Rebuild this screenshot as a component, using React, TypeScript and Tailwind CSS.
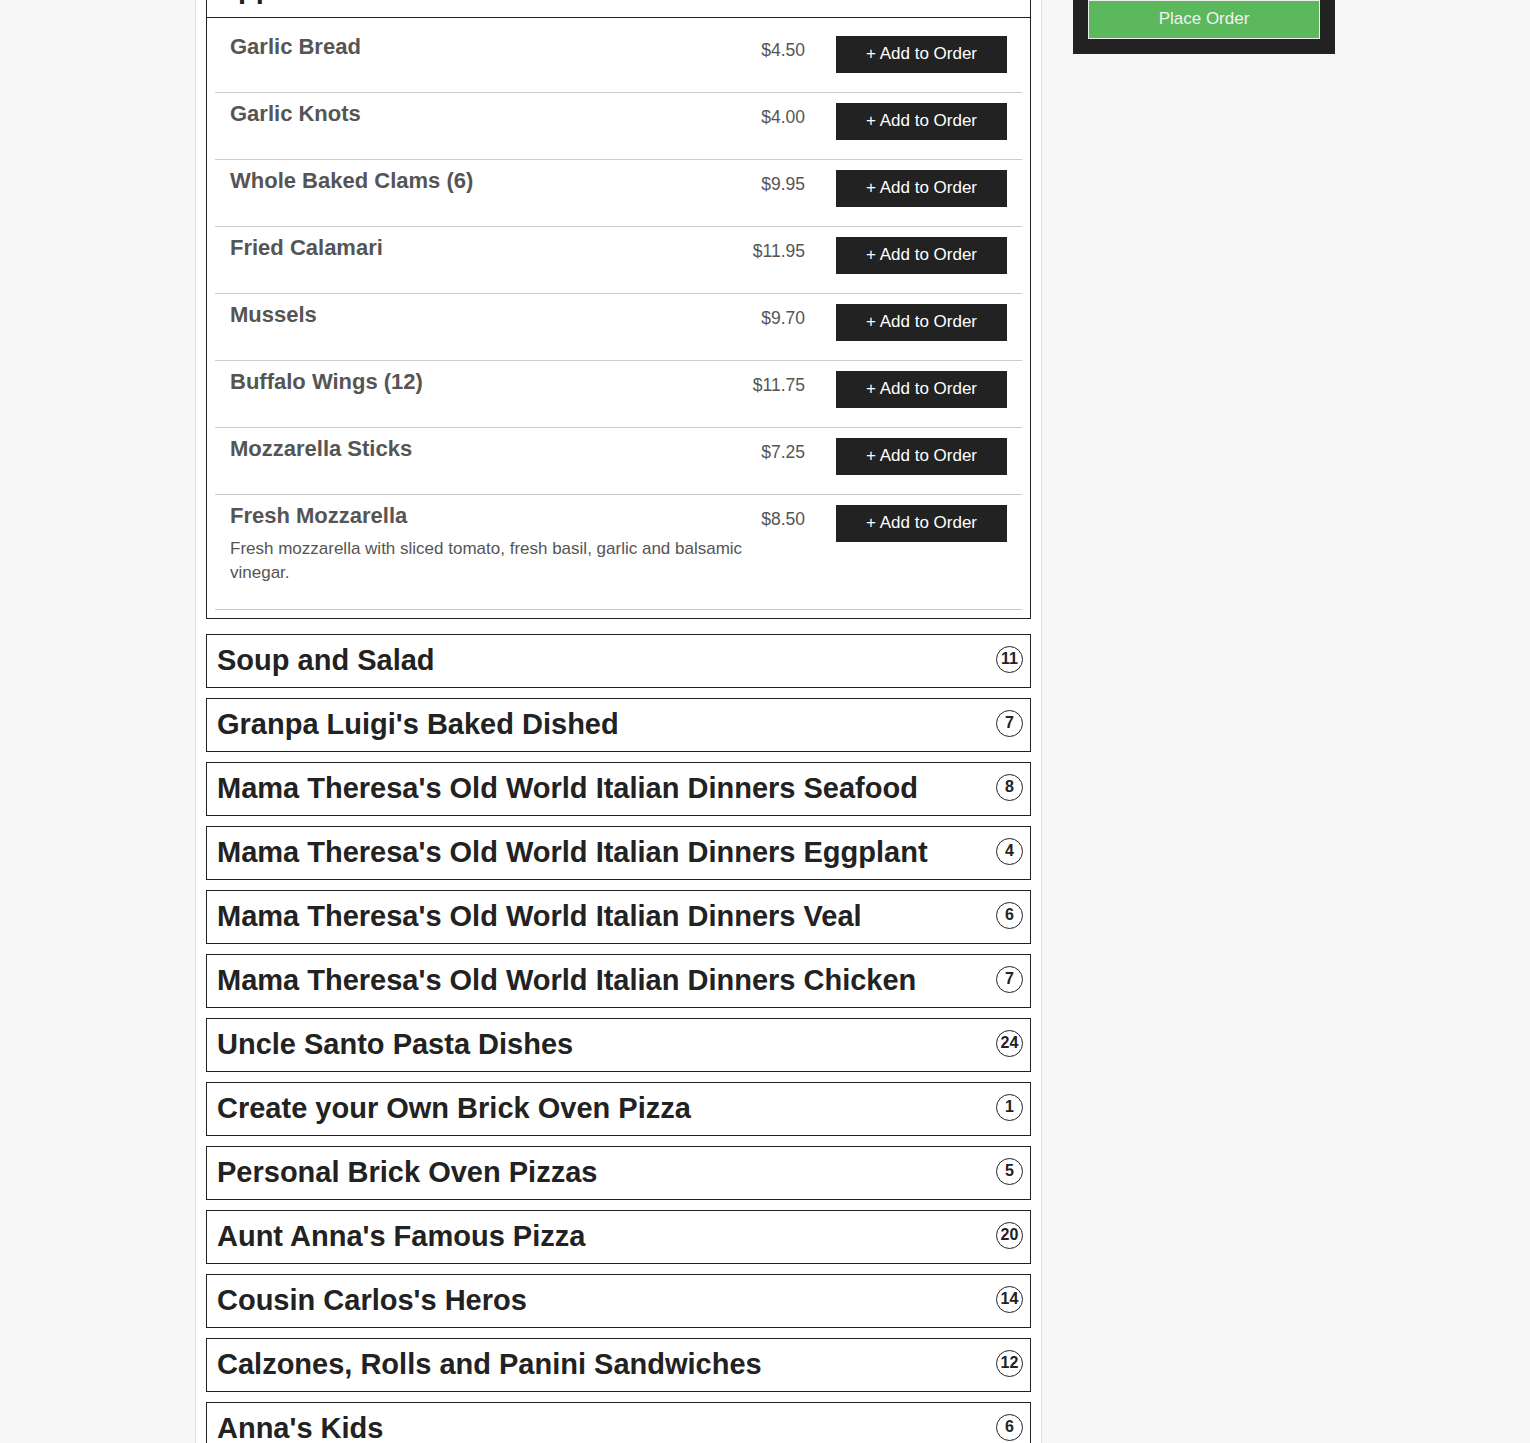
import React from "react";

const items = [
  { name: "Garlic Bread", price: "$4.50" },
  { name: "Garlic Knots", price: "$4.00" },
  { name: "Whole Baked Clams (6)", price: "$9.95" },
  { name: "Fried Calamari", price: "$11.95" },
  { name: "Mussels", price: "$9.70" },
  { name: "Buffalo Wings (12)", price: "$11.75" },
  { name: "Mozzarella Sticks", price: "$7.25" },
  {
    name: "Fresh Mozzarella",
    price: "$8.50",
    desc: "Fresh mozzarella with sliced tomato, fresh basil, garlic and balsamic vinegar.",
  },
];

const sections = [
  { title: "Soup and Salad", count: 11 },
  { title: "Granpa Luigi's Baked Dished", count: 7 },
  { title: "Mama Theresa's Old World Italian Dinners Seafood", count: 8 },
  { title: "Mama Theresa's Old World Italian Dinners Eggplant", count: 4 },
  { title: "Mama Theresa's Old World Italian Dinners Veal", count: 6 },
  { title: "Mama Theresa's Old World Italian Dinners Chicken", count: 7 },
  { title: "Uncle Santo Pasta Dishes", count: 24 },
  { title: "Create your Own Brick Oven Pizza", count: 1 },
  { title: "Personal Brick Oven Pizzas", count: 5 },
  { title: "Aunt Anna's Famous Pizza", count: 20 },
  { title: "Cousin Carlos's Heros", count: 14 },
  { title: "Calzones, Rolls and Panini Sandwiches", count: 12 },
  { title: "Anna's Kids", count: 6 },
];

function Badge({ n }: { n: number }) {
  return (
    <span className="mt-[-4px] flex h-[27px] w-[27px] items-center justify-center rounded-full border border-[#222] text-[16px] font-bold leading-none text-[#222]">
      {n}
    </span>
  );
}

function SectionHeader({ title, count, open }: { title: string; count: number; open?: boolean }) {
  return (
    <div
      className={`flex h-[52px] items-center justify-between pl-[10px] pr-[7px] ${
        open ? "border-b border-[#222] pb-[6px]" : ""
      }`}
    >
      <h2 className="mt-[-1px] text-[29px] font-bold leading-none text-[#222]">{title}</h2>
      <Badge n={count} />
    </div>
  );
}

export default function App() {
  return (
    <div
      className="min-h-screen overflow-hidden bg-[#f7f7f7]"
      style={{ fontFamily: '"Liberation Sans", Arial, sans-serif' }}
    >
      <div className="mx-auto flex w-[1140px] items-start gap-[31px]">
        {/* Menu column */}
        <div className="min-h-screen w-[847px] border-x border-[#ddd] bg-white px-[10px] pb-10">
          {/* Open section */}
          <div className="-mt-[35px] border border-[#222]">
            <SectionHeader title="Appetizers" count={8} open />
            <div className="px-[8px] pt-[8px] pb-[8px]">
              {items.map((it) => (
                <div key={it.name} className="flex border-b border-[#ccc] pl-[15px] pr-[15px] pt-[10px] pb-[19px]">
                  <div className="min-w-0 flex-1">
                    <div className="mt-[-1px] text-[22px] font-bold leading-[24px] text-[#555]">{it.name}</div>
                    {it.desc && (
                      <p className="mt-[9px] mb-[5px] text-[17px] leading-[24px] text-[#555]">{it.desc}</p>
                    )}
                  </div>
                  <div className="w-[60px] shrink-0 pt-[2px] text-right text-[17.5px] leading-[24px] text-[#555]">
                    {it.price}
                  </div>
                  <button className="ml-[31px] h-[37px] w-[171px] shrink-0 bg-[#222] pb-[2px] text-[17px] text-white">
                    + Add to Order
                  </button>
                </div>
              ))}
            </div>
          </div>

          {/* Collapsed sections */}
          <div className="mt-[15px] flex flex-col gap-[10px]">
            {sections.map((s) => (
              <div key={s.title} className="border border-[#222]">
                <SectionHeader title={s.title} count={s.count} />
              </div>
            ))}
          </div>
        </div>

        {/* Order sidebar */}
        <div className="w-[262px] bg-[#222] px-[15px] pb-[15px]">
          <button className="h-[39px] w-full border border-[#eee] bg-[#5cb85c] pb-[1px] text-[17px] text-[#f2f2f2]">
            Place Order
          </button>
        </div>
      </div>
    </div>
  );
}
